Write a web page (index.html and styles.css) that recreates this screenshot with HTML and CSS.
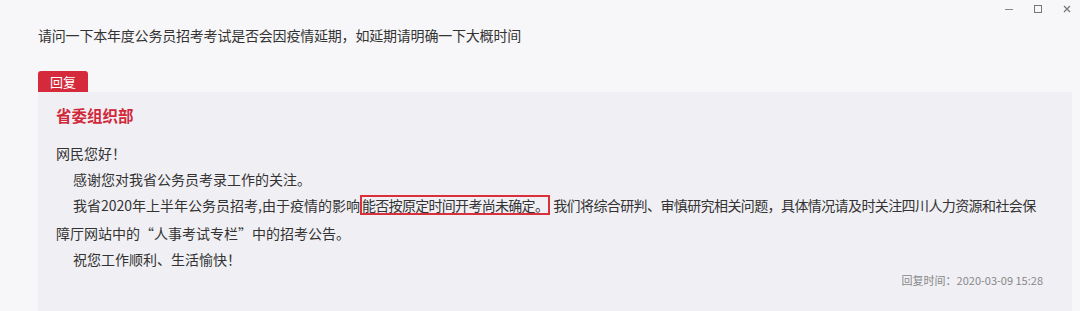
FILE: index.html
```html
<!DOCTYPE html>
<html lang="zh-CN">
<head>
    <meta charset="UTF-8">
    <meta name="viewport" content="width=device-width, initial-scale=1.0">
    <title>留言回复</title>
    <link rel="stylesheet" href="styles.css">
</head>
<body>

    <!-- Window controls -->
    <div class="window-controls">
        <span class="ctrl min"></span>
        <span class="ctrl max"></span>
        <svg class="ctrl close" width="8" height="8" viewBox="0 0 8 8">
            <path d="M1 1 L7 7 M7 1 L1 7" stroke="#777" stroke-width="1.3"/>
        </svg>
    </div>

    <div class="question">请问一下本年度公务员招考考试是否会因疫情延期，如延期请明确一下大概时间</div>

    <div class="reply">
        <div class="reply-tag">回复</div>
        <div class="reply-box">
            <h3 class="reply-org">省委组织部</h3>
            <p>网民您好！</p>
            <p class="indent">感谢您对我省公务员考录工作的关注。</p>
            <p class="indent long">我省2020年上半年公务员招考,由于疫情的影响<span class="mark">能否按原定时间开考尚未确定。</span><span class="tight">我们将综合研判、审慎研究相关问题，具体情况请及时关注四川人力资源和社会保</span><br>障厅网站中的“人事考试专栏”中的招考公告。</p>
            <p class="indent">祝您工作顺利、生活愉快！</p>
            <div class="reply-time">回复时间：2020-03-09 15:28</div>
        </div>
    </div>

</body>
</html>
```

FILE: styles.css
```css
/* Page */
body {
    margin: 0;
    height: 311px;
    overflow: hidden;
    background-color: #f7f6f8;
    font-family: "Microsoft YaHei", "Noto Sans CJK SC", sans-serif;
    color: #333;
}

/* Window controls top right */
.window-controls {
    position: absolute;
    top: 5px;
    right: 9px;
    display: flex;
    align-items: flex-start;
    gap: 21px;
}

.ctrl {
    display: block;
}

.ctrl.min {
    width: 8px;
    height: 1px;
    margin-top: 4px;
    background-color: #888;
}

.ctrl.max {
    width: 6px;
    height: 6px;
    border: 1px solid #777;
}

/* Question */
.question {
    padding: 25px 0 0 38px;
    font-size: 14px;
    line-height: 20px;
    letter-spacing: -0.2px;
    color: #333;
}

/* Reply block */
.reply {
    margin: 26px 8px 0 38px;
}

.reply-tag {
    display: block;
    width: 50px;
    height: 21px;
    line-height: 21px;
    text-align: center;
    font-size: 13px;
    color: #fff;
    background-color: #d52a3b;
    border-radius: 3px 3px 0 0;
}

.reply-box {
    background-color: #f0eff4;
    padding: 12px 29px 60px 18px;
}

.reply-org {
    margin: 0 0 14px;
    font-size: 15.5px;
    line-height: 22px;
    font-weight: bold;
    color: #d0283a;
}

.reply-box p {
    margin: 0;
    font-size: 14px;
    line-height: 26px;
    color: #333;
}

.reply-box p.indent {
    text-indent: 17px;
}

.reply-box p.long {
    white-space: nowrap;
}

.tight {
    letter-spacing: -0.6px;
}

/* Highlighted sentence */
.mark {
    display: inline-block;
    text-indent: 0;
    line-height: 16px;
    padding: 0;
    letter-spacing: -0.7px;
    border: 2px solid #d9303c;
    margin: 0 3px 5px 0;
}

.reply-time {
    margin-top: 0;
    line-height: 16px;
    text-align: right;
    font-size: 11px;
    color: #888;
}
```
